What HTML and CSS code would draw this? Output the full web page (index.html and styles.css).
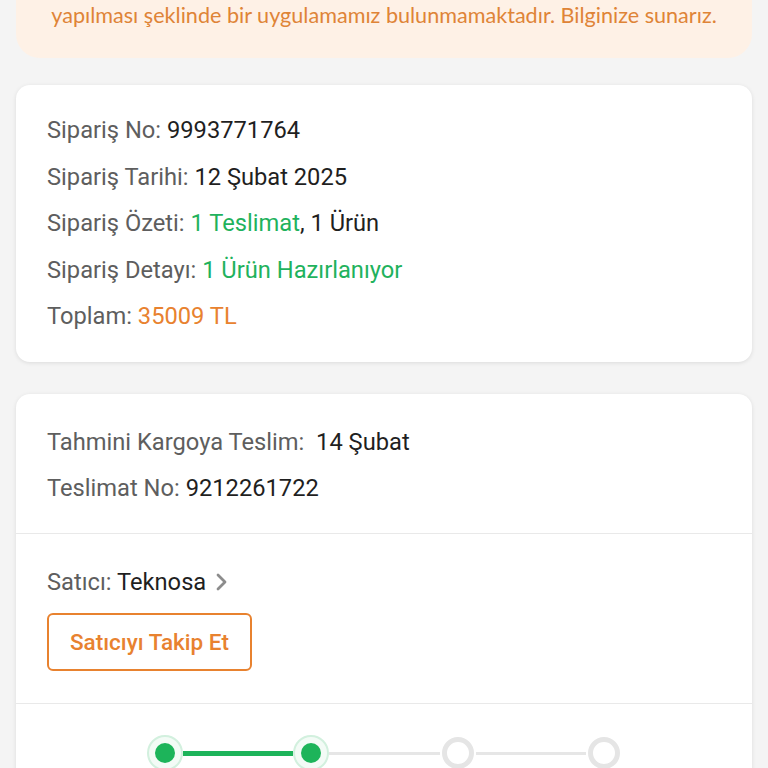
FILE: index.html
```html
<!DOCTYPE html>
<html lang="tr">
<head>
<meta charset="utf-8">
<link rel="stylesheet" href="styles.css">
</head>
<body>
<div class="page">
  <div class="notice">
    <p>yapılması şeklinde bir uygulamamız bulunmamaktadır. Bilginize sunarız.</p>
  </div>

  <div class="card summary">
    <div class="row"><span class="label">Sipariş No:</span> <span class="value">9993771764</span></div>
    <div class="row"><span class="label">Sipariş Tarihi:</span> <span class="value">12 Şubat 2025</span></div>
    <div class="row"><span class="label">Sipariş Özeti:</span> <span class="green">1 Teslimat</span><span class="value">, 1 Ürün</span></div>
    <div class="row"><span class="label">Sipariş Detayı:</span> <span class="green">1 Ürün Hazırlanıyor</span></div>
    <div class="row"><span class="label">Toplam:</span> <span class="orange">35009 TL</span></div>
  </div>

  <div class="card delivery">
    <div class="section info">
      <div class="row"><span class="label">Tahmini Kargoya Teslim:</span>&nbsp; <span class="value">14 Şubat</span></div>
      <div class="row"><span class="label">Teslimat No:</span> <span class="value">9212261722</span></div>
    </div>
    <div class="section seller">
      <div class="row"><span class="label">Satıcı:</span> <span class="value">Teknosa</span><svg class="chev" width="14" height="18" viewBox="0 0 14 18"><polyline points="3,2 10,9 3,16" fill="none" stroke="#8c8c8c" stroke-width="2.8" stroke-linecap="round" stroke-linejoin="round"/></svg></div>
      <button class="follow">Satıcıyı Takip Et</button>
    </div>
    <div class="section stepper">
      <div class="node done"><span class="dot"></span></div>
      <div class="line done"></div>
      <div class="node done"><span class="dot"></span></div>
      <div class="line"></div>
      <div class="node todo"></div>
      <div class="line"></div>
      <div class="node todo"></div>
    </div>
  </div>
</div>
</body>
</html>
```

FILE: styles.css
```css
html, body {
  margin: 0;
  padding: 0;
  background: #f4f4f4;
}
.page {
  padding: 0 16px;
  font-family: Roboto, "Noto Sans", sans-serif;
}
.notice {
  background: #fef1e6;
  border-radius: 0 0 24px 24px;
  padding: 1px 10px 28px;
  text-align: center;
}
.notice p {
  margin: 0;
  font-family: Lato, "Noto Sans", sans-serif;
  font-size: 21.6px;
  line-height: 29px;
  color: #df8437;
}
.card {
  background: #fff;
  border-radius: 14px;
  box-shadow: 0 1px 4px rgba(0,0,0,0.10);
  overflow: hidden;
}
.summary {
  margin-top: 27px;
  padding: 22px 31px 22px;
}
.delivery {
  margin-top: 32px;
}
.row {
  font-size: 23.7px;
  line-height: 46.5px;
  height: 46.5px;
  white-space: nowrap;
}
.label { color: #5e5e5e; }
.value { color: #1f1f1f; }
.green { color: #1fb25d; }
.orange { color: #e8822f; }
.section {
  border-top: 1px solid #e9e9e9;
}
.section.info {
  border-top: none;
  padding: 25px 31px 21px;
}
.section.seller {
  padding: 25px 31px 32px;
}
.chev {
  margin-left: 9px;
  vertical-align: -1px;
}
.follow {
  display: block;
  margin-top: 8px;
  height: 58px;
  padding: 0 21px;
  border: 2px solid #e8822f;
  border-radius: 6px;
  background: #fff;
  color: #e8822f;
  font-family: Roboto, "Noto Sans", sans-serif;
  font-size: 22.5px;
  font-weight: 500;
}
.stepper {
  display: flex;
  align-items: center;
  padding: 31px 130px 40px 131px;
}
.node {
  width: 36px;
  height: 36px;
  flex: none;
  display: flex;
  align-items: center;
  justify-content: center;
  box-sizing: border-box;
  border-radius: 50%;
}
.node.done {
  background: #f3fbf6;
  border: 2px solid #d2f0de;
}
.node.done .dot {
  width: 20px;
  height: 20px;
  border-radius: 50%;
  background: #1db45a;
}
.node.todo {
  width: 32px;
  height: 32px;
  margin: 0 2px;
  border: 5px solid #e5e5e5;
  background: #fff;
}
.line {
  flex: 1;
  height: 3px;
  background: #e6e6e6;
}
.line.done {
  height: 5px;
  background: #1db45a;
}
```
